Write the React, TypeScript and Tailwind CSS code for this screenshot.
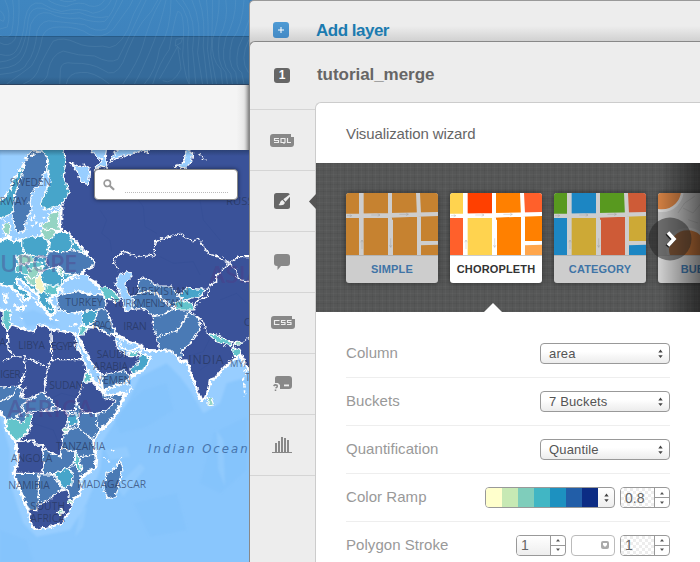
import React from "react";

const NAVY = "#3a5299";
const BLUE = "#4a7ab5";
const TEAL = "#47a5ca";
const AQUA = "#63c4cb";
const MINT = "#94d4c3";
const CREAM = "#f4f5c4";
const SEA = "#98ceff";

type Shape = [string, string];

const land: Shape[] = [
  [NAVY, "M188 -10L760 -10 760 662 747 660 730 635 720 610 705 625 675 650 645 685 630 690 625 720 615 745 603 752 585 705 570 660 560 632 540 635 530 618 510 600 475 602 435 600 420 585 385 575 345 550 330 510 300 460 290 400 240 370 180 340Z"],
  [TEAL, "M-10 275L25 262 40 275 65 268 120 258 170 245 205 248 280 335 250 365 205 385 185 410 170 432 150 440 148 455 165 470 166 488 152 500 135 480 120 460 110 430 85 412 55 385 48 400 95 440 80 450 60 432 30 410 -10 400Z"],
  [NAVY, "M235 562L245 530 290 532 325 552 345 552 356 590 375 605 415 605 450 625 435 655 395 680 375 695 310 722 300 672 270 635Z"],
  [BLUE, "M-10 480L10 480 30 485 25 510 35 525 80 540 100 548 110 530 135 525 155 540 190 545 220 550 235 580 222 585 240 620 255 645 262 675 285 700 305 725 325 738 375 728 350 790 325 820 300 840 280 870 288 915 285 955 245 980 240 1035 215 1050 210 1080 185 1120 150 1130 105 1138 95 1120 85 1080 60 1020 42 970 55 930 45 875 20 840 18 810 0 785 -10 785Z"],
];

const countries: Shape[] = [
  [TEAL, "M118 -10L80 25 65 50 42 85 30 120 10 145 -10 160 -10 210 25 195 40 182 45 130 65 80 90 30Z"],
  [BLUE, "M85 12L105 0 140 8 145 50 130 75 122 100 95 130 90 160 97 180 80 202 75 240 52 252 40 220 38 180 45 130 65 80 73 35Z"],
  [TEAL, "M120 -10L190 -10 197 40 190 80 208 125 188 160 165 172 132 180 122 160 140 120 152 92 140 60 145 30Z"],
  [MINT, "M147 190L178 185 175 215 179 242 150 240 125 235 125 222 145 215Z"],
  [MINT, "M122 240L160 238 168 250 155 270 130 268Z"],
  [MINT, "M10 240L16 220 28 215 30 245 18 255Z"],
  [TEAL, "M150 268L168 246 205 248 218 285 205 305 160 305 145 300Z"],
  [TEAL, "M65 265L120 258 145 275 145 320 120 322 75 310 65 290Z"],
  [BLUE, "M145 305L205 305 215 298 245 305 282 330 278 350 250 362 240 375 195 370 180 350 150 355 135 335Z"],
  [MINT, "M48 320L75 312 105 328 90 342 60 340Z"],
  [AQUA, "M50 345L90 343 100 335 128 338 120 355 80 375 48 364Z"],
  [MINT, "M85 355L130 350 120 370 100 385 80 378Z"],
  [TEAL, "M125 362L165 352 188 380 185 405 135 405 118 385Z"],
  [MINT, "M172 350L186 355 190 380 180 372Z"],
  [MINT, "M75 382L105 383 104 410 82 395Z"],
  [CREAM, "M105 385L122 376 133 402 130 425 118 430 104 410Z"],
  [AQUA, "M133 407L182 408 168 432 140 434Z"],
  [BLUE, "M170 440L200 430 240 425 275 436 305 433 318 460 315 480 245 485 210 490 175 480Z"],
  [TEAL, "M248 485L295 480 285 510 265 528 246 522Z"],
  [BLUE, "M295 480L318 478 330 510 345 550 325 555 290 530 265 530 285 512Z"],
  [AQUA, "M240 530L265 530 250 555 238 555Z"],
  [AQUA, "M290 408L328 414 360 440 350 462 336 446 318 445Z"],
  [BLUE, "M415 388L440 383 470 408 515 408 533 438 550 450 520 472 470 430 440 422 417 435Z"],
  [BLUE, "M395 440L440 422 465 430 500 462 518 475 490 495 460 500 430 475 395 478Z"],
  [BLUE, "M460 500L490 495 520 475 550 475 568 480 545 520 530 545 470 560 460 530Z"],
  [BLUE, "M470 560L530 545 550 520 568 485 590 500 604 530 570 580 545 600 548 625 530 618 510 600 480 600Z"],
  [TEAL, "M535 435L560 415 618 418 600 438 555 450Z"],
  [AQUA, "M520 457L550 452 577 460 583 480 530 480Z"],
  [AQUA, "M623 550L650 555 695 578 690 588 650 575Z"],
  [MINT, "M702 575L720 573 724 582 704 583Z"],
  [AQUA, "M695 592L722 600 715 620 703 620Z"],
  [MINT, "M622 742L634 745 641 765 625 768Z"],
  [TEAL, "M415 625L425 608 450 625 435 655 395 675 390 655 410 645Z"],
  [AQUA, "M385 610L420 598 410 620 390 620Z"],
  [BLUE, "M305 675L375 662 390 680 375 695 310 720Z"],
  [NAVY, "M-10 480L10 480 12 520 22 545 25 600 45 618 0 638 -10 640Z"],
  [AQUA, "M10 480L32 484 28 510 35 522 22 545 8 515Z"],
  [NAVY, "M35 525L80 540 100 548 110 530 135 525 153 540 155 632 143 652 72 618 45 618 25 600 22 545Z"],
  [NAVY, "M153 540L220 550 235 580 222 585 240 610 255 628 155 629Z"],
  [NAVY, "M-10 640L45 618 72 618 77 662 60 700 55 708 -10 712Z"],
  [NAVY, "M72 618L143 652 133 700 140 720 110 735 70 750 60 705 77 662Z"],
  [NAVY, "M155 629L255 629 262 672 245 712 230 750 225 785 190 782 160 768 134 730 135 700 145 650Z"],
  [AQUA, "M255 670L268 670 277 695 250 697Z"],
  [NAVY, "M250 697L275 695 300 725 310 745 350 752 320 782 290 790 250 785 228 758Z"],
  [BLUE, "M65 765L120 730 134 730 165 765 150 780 75 790Z"],
  [NAVY, "M85 786L150 780 195 782 207 798 190 850 185 895 180 920 165 913 130 898 128 884 105 885 98 870 50 875 82 850 95 820Z"],
  [AQUA, "M20 810L45 805 70 820 80 790 97 790 90 835 70 860 48 872 20 840Z"],
  [TEAL, "M205 790L235 792 235 818 205 833Z"],
  [MINT, "M190 838L202 834 200 852 190 855Z"],
  [NAVY, "M50 875L98 872 105 888 128 885 130 920 128 970 45 970 57 930Z"],
  [BLUE, "M235 790L290 790 290 820 300 840 280 870 235 832Z"],
  [BLUE, "M130 898L165 913 182 922 185 895 225 905 225 940 200 955 165 970 130 972Z"],
  [BLUE, "M115 975L160 975 188 1018 140 1055 115 1062Z"],
  [AQUA, "M225 903L238 925 245 958 236 965 223 935Z"],
  [TEAL, "M163 972L200 955 220 970 215 1005 190 1015Z"],
  [NAVY, "M85 1080L110 1082 115 1062 140 1055 175 1025 205 1018 208 1045 218 1055 210 1080 185 1120 150 1130 105 1138 95 1120Z"],
  [MINT, "M172 1085L185 1077 192 1085 180 1096Z"],
  [MINT, "M204 1050L214 1048 214 1060 204 1060Z"],
  [BLUE, "M360 930L368 955 345 1040 325 1048 312 1020 318 970 345 960Z"],
  [SEA, "M180 410L205 385 235 385 245 370 265 378 268 392 295 410 310 430 275 435 235 420 195 432Z"],
  [SEA, "M345 400L360 372 385 365 396 378 375 400 385 430 400 450 398 480 375 482 365 440Z"],
  [SEA, "M210 38L235 52 250 45 270 55 265 105 240 90 232 65Z"],
  [SEA, "M280 10L270 -10 320 -10 316 20 322 55 300 50 283 58 305 30Z"],
  [SEA, "M328 38L345 5 380 -10 450 -10 445 10 420 0 390 15 350 22Z"],
  [SEA, "M560 0L578 8 575 35 555 55 525 48 550 38Z"],
];

const borders =
  "M750 320L715 320 685 340 660 322 625 312 610 285 595 265 577 275 540 250 500 262 465 275 462 318 440 315 410 320 375 305 345 320 340 335 358 360M685 340L710 360 715 388 750 395M685 340L650 378 650 395 630 405 622 440 590 455 583 480M590 500L612 520 620 550M725 578L750 560M718 600L735 632M0 755L35 740 60 705M45 805L75 780M75 712L60 745M190 850L215 835 235 832M237 920L285 915M600 10L610 28 620 30";

function WorldMap() {
  return (
    <svg className="block h-full w-full" viewBox="0 0 747 1236" preserveAspectRatio="none">
      <defs>
        <filter id="rough" x="0" y="0" width="100%" height="100%" colorInterpolationFilters="sRGB">
          <feTurbulence type="fractalNoise" baseFrequency="0.09" numOctaves="3" seed="8" />
          <feDisplacementMap in="SourceGraphic" scale="16" xChannelSelector="R" yChannelSelector="G" />
        </filter>
        <filter id="soft" x="-5%" y="-5%" width="110%" height="110%">
          <feGaussianBlur stdDeviation="3" />
        </filter>
        <linearGradient id="mapShade" x1="0" y1="0" x2="0" y2="1">
          <stop offset="0" stopColor="#123" stopOpacity=".35" />
          <stop offset="1" stopColor="#123" stopOpacity="0" />
        </linearGradient>
      </defs>
      <rect width="750" height="1236" fill="#89c6fd" />
      <g filter="url(#soft)">
        <path fill={SEA} d="M0 0H190V250L110 270 0 270ZM0 370L300 370 420 480 320 580 260 600 200 560 0 530ZM0 800L30 900 30 1000 70 1120 110 1160 210 1140 260 1060 300 960 310 870 380 760 420 680 500 640 540 680 570 720 610 790 660 760 680 700 747 680V560H220L0 600Z" />
        <path fill="#80c0f9" opacity=".4" d="M60 490L100 480 150 500 180 530 140 520 80 530ZM340 800L430 720 500 700 520 780 440 830 360 850ZM640 850L740 800V960L660 1030 600 1000ZM400 1060L530 1030 560 1140 450 1160ZM0 1140L80 1170 100 1236H0Z" />
        <path fill="#a3d4ff" opacity=".35" d="M290 850L320 900 380 890 390 920 330 930ZM650 840L670 870 675 1010 655 960ZM350 1010L420 940 435 955 370 1040ZM240 1080L260 1070 250 1130 225 1160Z" />
      </g>
      <g filter="url(#rough)" strokeLinejoin="round">
        {land.map(([fill, d]) => <path key={d} d={d} fill={fill} stroke="#fff" strokeWidth="8" />)}
        {countries.map(([fill, d]) => <path key={d} d={d} fill={fill} stroke="#fff" strokeWidth="3.6" />)}
        <path d={borders} fill="none" stroke="#fff" strokeWidth="3.8" />
        <path fill="#98ceff" stroke="#fff" strokeWidth="4" d="M222 553L232 556 250 600 272 635 298 672 300 705 284 692 262 660 245 618ZM345 553L358 562 362 590 385 603 425 590 424 600 376 614 352 594Z" />
        <g fill="none" stroke="#fff" strokeWidth="6" strokeDasharray="9 7 15 8">
          <path d="M115 0L78 32 66 55 42 88 30 120 8 145 0 155M12 208L8 240 25 260 45 262M90 210L102 195 110 218 96 230M132 200L122 225M130 178L195 176M135 450L160 452M128 470L160 480M100 440L118 475M150 505L175 512M40 465L70 478M60 505L72 510M50 435L80 470" />
          <path d="M378 700L400 718M375 740L392 715M720 610L740 650 730 690 735 740M180 375L248 372M250 365L285 350M205 530L235 520M365 920L340 960M310 920L330 935M340 900L330 905" strokeWidth="4.5" />
        </g>
        <path fill={TEAL} stroke="#fff" strokeWidth="6" d="M12 435L20 432 20 455 14 456ZM50 475L72 468 66 482Z" />
      </g>
      <g fill="none" stroke="#2f498f" strokeWidth="2" opacity=".45">
        <path d="M300 180l20 30-15 40 25 20 5 35M400 130l30 40 5 60 35 20M480 320l40 20 60-5 20 40M600 150l10 60 50 60M560 620l50-15 20-40M600 660l30-20M660 450l50-20 30 30M100 820l60 20 20 50M155 745l30-15 40 10 20-25" />
      </g>
      <g fontFamily='"Open Sans","Noto Sans",sans-serif' fill="#253257" fillOpacity=".66" fontSize="31">
        <text x="30" y="109" textLength="124">SWEDEN</text>
        <text x="-24" y="166" textLength="105">ORWAY</text>
        <text x="678" y="166" fontSize="34">RUSSIA</text>
        <text x="196" y="469" textLength="112">TURKEY</text>
        <text x="278" y="536" textLength="60">IRAQ</text>
        <text x="370" y="541" textLength="70" fontSize="32">IRAN</text>
        <text x="382" y="435" textLength="186">UZBEKISTAN</text>
        <text x="340" y="470" textLength="210">TURKMENISTAN</text>
        <text x="55" y="597" textLength="80">LIBYA</text>
        <text x="153" y="600" textLength="82">EGYPT</text>
        <text x="-2" y="589">A</text>
        <text x="-20" y="684" textLength="82">NIGER</text>
        <text x="148" y="717" textLength="102">SUDAN</text>
        <text x="290" y="624" textLength="90">SAUDI</text>
        <text x="280" y="660" textLength="104">ARABIA</text>
        <text x="292" y="703" textLength="102">YEMEN</text>
        <text x="565" y="642" textLength="106" fontSize="37">INDIA</text>
        <text x="690" y="651" fontSize="28">MYA</text>
        <text x="735" y="693">T</text>
        <text x="731" y="527" fontSize="34">C</text>
        <text x="168" y="899" textLength="148">TANZANIA</text>
        <text x="33" y="936" textLength="124">ANGOLA</text>
        <text x="25" y="1017" textLength="124">NAMIBIA</text>
        <text x="232" y="1015" textLength="206">MADAGASCAR</text>
        <text x="91" y="1080" textLength="104">SOUTH</text>
        <text x="91" y="1116" textLength="104">AFRICA</text>
      </g>
      <g fontFamily='"Open Sans","Noto Sans",sans-serif' fontWeight="600" fill="#53357f" fillOpacity=".36" fontSize="72">
        <text x="-38" y="366" textLength="270">EUROPE</text>
        <text x="22" y="800" textLength="258">AFRICA</text>
        <text x="628" y="399">ASIA</text>
      </g>
      <text x="444" y="909" textLength="299" fontFamily='"DejaVu Sans",sans-serif' fontStyle="italic" fontSize="35" fill="#4775ad">Indian Ocean</text>
      <rect width="750" height="18" fill="url(#mapShade)" />
    </svg>
  );
}

function Contours() {
  return (
    <svg className="h-full w-full" viewBox="0 0 750 255" preserveAspectRatio="none">
      <g fill="none" stroke="#9ac1d8" strokeWidth="2.2" opacity=".18">
        <path d="M0 32Q20 50 10 65L0 60M15 0Q35 40 22 82L0 88M38 0Q45 45 35 100Q25 120 0 108M57 0Q60 80 45 120Q25 145 0 130M0 165Q35 175 48 155Q70 120 75 60Q85 0 125 10Q155 30 185 35Q240 20 280 40Q320 35 335 0" />
        <path d="M0 208Q55 205 70 170Q85 145 92 75Q110 30 150 40Q185 60 240 55Q285 70 315 65Q340 40 352 0M0 188Q40 185 60 160Q80 120 85 60Q90 18 130 25Q185 50 240 38Q290 60 325 50M0 226Q75 220 82 190Q105 165 112 95Q125 55 165 65Q220 70 255 75Q290 100 320 88Q355 30 370 0" />
        <path d="M20 255Q70 220 95 200Q120 160 128 110Q140 80 180 82Q235 80 270 105Q305 120 340 90Q365 55 390 20L400 0M70 255Q110 240 120 200Q145 150 160 125Q190 110 230 130Q260 145 310 140Q350 160 385 90Q400 40 425 0M120 250Q145 240 145 215Q155 165 190 155Q235 170 285 170Q330 195 355 180Q390 110 410 65L440 0" />
        <path d="M180 255L182 210Q185 185 220 192Q275 190 310 212Q345 240 370 190Q405 100 430 65Q460 35 475 0M200 255Q205 220 245 220Q280 215 330 255M145 0Q165 15 200 20Q240 0 270 18Q300 25 315 0M180 0Q205 10 230 0M370 255Q415 190 430 140Q450 60 485 0M405 255Q430 210 450 160Q480 90 500 0M435 255Q470 215 480 150Q515 90 515 0M460 255Q480 190 510 150Q525 60 535 35Q560 30 550 170Q560 245 570 255M480 240Q515 180 535 140Q545 200 545 210Q520 260 490 245M530 120L550 115 545 130 528 140 530 120M532 140L545 150" />
        <path d="M530 0Q580 45 565 130L570 255M550 0Q595 60 580 150L590 255M578 0Q610 70 595 160L610 255M600 0Q620 60 612 140L625 255M622 0Q630 80 625 150L640 255M640 0Q640 100 635 165L652 255M660 0Q660 60 640 120Q635 180 665 210L670 255M680 0Q690 60 660 115Q650 190 680 220L685 255M710 0Q710 60 680 115Q660 190 695 225L700 255M735 0Q730 80 700 120Q680 190 710 220L715 255M750 60Q735 110 718 145Q705 210 728 220L735 255M750 120Q720 180 748 220" />
      </g>
    </svg>
  );
}

const Roads = ({ color }: { color: string }) => (
  <>
    <path fill={color} d="M39 0h14v186h-14zM126 0h12v186h-12zM126 80h15v106h-15zM210 0h12l3 60v126h-12V70zM0 62L130 60 276 57v12L130 74 0 75zM222 144h54v11l-54 2z" />
    <g stroke="#777" strokeWidth="2.5" opacity=".28" fill="none">
      <path d="M3 68h14m-6-4l6 4-6 4M76 66h26m-7-4l7 4-7 4M160 64h27m-7-4l7 4-7 4M48 168v-27m-4 7l4-7 4 7M134 136v27m-4-7l4 7 4-7" />
    </g>
  </>
);

const mapTiles: Record<string, { fills: string[]; road: string }> = {
  SIMPLE: { fills: Array(10).fill("#c68230"), road: "#cdcdcd" },
  CHOROPLETH: { fills: ["#ffd34f", "#ff4000", "#ff8000", "#ff602b", "#ff602b", "#ffd34f", "#ff8000", "#ff8000", "#ffa64c"], road: "#fff" },
  CATEGORY: { fills: ["#58991f", "#1c86c3", "#58991f", "#ce5b37", "#1c86c3", "#cda936", "#ce5b37", "#cda936", "#1c86c3"], road: "#cdcdcd" },
};

const blocks = ["M0 0h45v66H0z", "M45 0h87v66H45z", "M132 0h84v66h-84z", "M216 0h60v66h-60z", "M0 66h45v120H0z", "M45 66h87v120H45z", "M132 66h84v120h-84z", "M216 66h60v84h-60z", "M216 150h60v36h-60z"];

function Thumb({ name }: { name: string }) {
  const active = name === "CHOROPLETH";
  const tile = mapTiles[name];
  return (
    <div className={"h-[90px] w-[92px] shrink-0 overflow-hidden rounded-[3px] shadow-[0_0_6px_rgba(0,0,0,0.45)] " + (active ? "bg-white" : "bg-[#cdcdcd]")}>
      <svg className="block h-[62px] w-[92px]" viewBox="0 0 276 186">
        {tile ? (
          <>
            {blocks.map((d, i) => <path key={d} d={d} fill={tile.fills[i]} />)}
            <Roads color={tile.road} />
          </>
        ) : (
          <>
            <rect width="276" height="186" fill="#bababa" />
            <path d="M60 60l20-30 30-20M75 45l30 15 25-30M90 80l30 10" stroke="#aaa" strokeWidth="3" fill="none" />
            <circle cx="12" cy="-8" r="61" fill="#cc7c41" stroke="#d0d0d0" strokeWidth="8" />
            <circle cx="89" cy="168" r="60" fill="#bd7139" stroke="#c8c8c8" strokeWidth="8" />
          </>
        )}
      </svg>
      <div className={"flex h-7 items-center justify-center border-t text-[11px] font-bold tracking-[0.15px] " + (active ? "border-[#ccc] text-[#333]" : "border-[#b4b4b4] text-[#3f74a6]")}>
        {name}
      </div>
    </div>
  );
}

const Arrows = ({ gap = false }: { gap?: boolean }) => (
  <svg className={gap ? "h-[20px] w-[14px]" : "h-[10px] w-[5px]"} viewBox={gap ? "0 0 14 20" : "0 0 5 10"}>
    {gap ? (
      <path fill="#555" d="M5 6.5h4L7 4zM5 13.5h4L7 16z" />
    ) : (
      <path fill="#444" d="M.3 3.4h4.4L2.5 .5zM.3 6.2h4.4L2.5 9.1z" />
    )}
  </svg>
);

function Select({ value }: { value: string }) {
  return (
    <div className="flex h-[21px] w-[130px] items-center justify-between rounded-[4px] border border-[#999] bg-linear-to-b from-white from-40% to-[#ececec] pr-[6px] pl-2 text-[13px] tracking-[0.15px] text-[#555]">
      <span>{value}</span>
      <Arrows />
    </div>
  );
}

function Spinner({ value, checks = false }: { value: string; checks?: boolean }) {
  return (
    <div className="flex h-[21px] w-[50px] overflow-hidden rounded-[4px] border border-[#999] bg-white text-[14px] text-[#666]">
      <div className={"flex w-[34px] items-center border-r border-[#999] pt-px pl-1 " + (checks ? "bg-[repeating-conic-gradient(#ededed_0_25%,#fff_0_50%)] bg-[length:6px_6px]" : "bg-linear-to-b from-white to-[#eee]")}>
        {value}
      </div>
      <div className="relative flex flex-1 items-center justify-center">
        <div className="absolute inset-x-0 top-[9px] h-px bg-[#999]" />
        <Arrows gap />
      </div>
    </div>
  );
}

function Row({ label, children, last }: { label: string; children: React.ReactNode; last?: boolean }) {
  return (
    <div className={"flex h-12 items-center justify-between " + (last ? "" : "border-b border-[#eee]")}>
      <span className="text-[15px] tracking-[0.05px] text-[#999]">{label}</span>
      <div className="flex items-center gap-[5px]">{children}</div>
    </div>
  );
}

const tag = (
  <path d="M3 0h18v3h3v7q0 3-3 3H3q-3 0-3-3V3Q0 0 3 0z" fill="#888" />
);

const tools: React.ReactNode[] = [
  <svg key="sql" className="h-[13px] w-6" viewBox="0 0 24 13">
    {tag}
    <path d="M9 4.5H4.5v2h4v2H4M11 4.5h4v4h-4zM14 8v2M17.5 4v4.5H21" fill="none" stroke="#eee" strokeWidth="1.15" />
  </svg>,
  <svg key="brush" className="h-4 w-4" viewBox="0 0 16 16">
    <rect width="16" height="16" rx="2.5" fill="#666" />
    <path d="M16 1.2L9.3 6.3l2.2 2.5L16 3.7zM8.5 7.1l2.3 2.5c0 2-2 3-6.3 2.4 1.8-.7 1.2-4 4-4.9z" fill="#eee" />
  </svg>,
  <svg key="bubble" className="h-4 w-4" viewBox="0 0 16 16">
    <path d="M3 0h10q3 0 3 3v6q0 3-3 3H7l-3.5 4V12H3q-3 0-3-3V3q0-3 3-3z" fill="#888" />
  </svg>,
  <svg key="css" className="mb-px ml-0.5 h-[13px] w-6" viewBox="0 0 24 13">
    {tag}
    <path d="M8.5 4.5h-5v4h5M14.5 4.5H10.500v2h3.500v2H10M20.500 4.500h-4v2h3.500v2H16" fill="none" stroke="#eee" strokeWidth="1.15" />
  </svg>,
  <svg key="info" className="h-4 w-[19px]" viewBox="0 0 19 16">
    <path d="M4 0h12q3 0 3 3v7q0 3-3 3H7V9L5 7H2V2q0-2 2-2z" fill="#888" />
    <path d="M11 8.500h5v1.800h-5z" fill="#eee" />
    <path d="M.6 10Q2 8.300 4 9.200Q5 11 2.500 12M2.500 13.500v1.500" fill="none" stroke="#888" strokeWidth="1.500" />
  </svg>,
  <svg key="bars" className="h-4 w-5" viewBox="0 0 20 16">
    <path d="M0 15h20v1H0zM3 6h2v9H3zM6 4h2v11H6zM9 0h2v15H9zM12 1h2v14h-2zM15 3h2v12h-2z" fill="#888" />
  </svg>,
];

const ramp = ["#ffffcc", "#c7e9b4", "#7fcdbb", "#41b6c4", "#1d91c0", "#225ea8", "#0c2c84"];

export default function App() {
  return (
    <div className='flex h-[562px] w-[700px] overflow-hidden bg-[#ececec] font-["Liberation_Sans",Arial,sans-serif]'>
      <div className="flex w-[249px] shrink-0 flex-col">
        <div className="relative h-[85px] border-b border-[#2b4360] bg-linear-to-b from-[#3f86c0] to-[#3d7fba]">
          <div className="absolute inset-x-0 top-9 bottom-0 border-t border-[#285b87] bg-linear-to-b from-[#356b9b] from-85% to-[#2d5c86]" />
          <div className="absolute inset-0"><Contours /></div>
        </div>
        <div className="h-[65px] bg-[linear-gradient(to_right,#f4f4f4_95%,#e8e8e8_98%,#c9c9c9)]" />
        <div className="relative h-[412px]">
          <WorldMap />
          <div className="absolute top-[19px] left-[94px] flex h-[31px] w-36 items-center rounded-[4px] border border-[#888] bg-white pr-[9px] pl-2 shadow-[0_0_4px_rgba(0,0,0,0.5)]">
            <svg className="h-3 w-3" viewBox="0 0 12 12">
              <circle cx="4.300" cy="4.300" r="3.200" fill="none" stroke="#999" strokeWidth="1.600" />
              <path d="M6.500 6.500l4.600 4.300" stroke="#999" strokeWidth="2.200" />
            </svg>
            <div className="mt-[15px] ml-[10px] flex-1 border-b border-dotted border-[#bbb]" />
          </div>
        </div>
      </div>

      <div className="flex min-w-0 flex-1 flex-col bg-[#3d7fba] shadow-[-1px_0_4px_rgba(0,0,0,0.5)]">
        <div className="z-0 -mb-[10px] flex h-[51px] shrink-0 items-start rounded-tl-[5px] border-t border-l border-[#999] bg-[linear-gradient(to_bottom,#ededed_50%,#cfcfcf_82%)] pt-[21px] pl-[23px]">
          <div className="flex h-4 w-4 items-center justify-center rounded-[3px] bg-linear-to-b from-[#4e9bd5] to-[#4389c4]">
            <svg className="h-[6px] w-[6px]" viewBox="0 0 6 6"><path d="M3 0v6M0 3h6" stroke="#fff" /></svg>
          </div>
          <span className="ml-[27px] text-[17px] leading-[18px] font-bold tracking-[-0.5px] text-[#1c7bb0]">Add layer</span>
        </div>
        <div className="z-10 flex min-h-0 flex-1 flex-col rounded-tl-[6px] border-t border-l border-[#888] bg-[#ededed]">
          <div className="-mb-[7px] flex h-[67px] shrink-0 items-center pb-px pl-6">
            <div className="flex h-[15px] w-4 items-center justify-center rounded-[3px] bg-[#666] text-[12px] font-bold text-white">1</div>
            <span className="ml-[27px] text-[17px] font-bold tracking-[-0.05px] text-[#666]">tutorial_merge</span>
          </div>
          <div className="flex min-h-0 flex-1">
            <div className="flex w-[65px] shrink-0 flex-col pt-[7px]">
              {tools.map((icon, i) => (
                <div key={i} className="relative flex h-[61px] shrink-0 items-center justify-center border-t border-[#d5d5d5] pr-px">
                  {icon}
                  {i === 1 && (
                    <svg className="absolute top-[23px] -right-px h-[15px] w-[7px]" viewBox="0 0 7 15">
                      <path d="M7 0v15L0 7.500z" fill="#555" />
                    </svg>
                  )}
                </div>
              ))}
              <div className="border-t border-[#d5d5d5]" />
            </div>
            <div className="flex min-w-0 flex-1 flex-col overflow-hidden rounded-tl-[6px] border-t border-l border-[#ccc] bg-white">
              <div className="flex h-[60px] shrink-0 items-center pt-[3px] pl-[30px] text-[15px] tracking-[-0.1px] text-[#666]">Visualization wizard</div>
              <div className="relative h-[149px] shrink-0 overflow-hidden bg-[#565757] bg-[repeating-linear-gradient(to_right,rgba(0,0,0,0.045)_0_1px,transparent_1px_3px,rgba(255,255,255,0.025)_3px_4px,transparent_4px_7px),repeating-linear-gradient(to_bottom,rgba(0,0,0,0.045)_0_1px,transparent_1px_4px,rgba(255,255,255,0.025)_4px_5px,transparent_5px_7px)]">
                <div className="flex gap-3 pt-[30px] pl-[30px]">
                  {["SIMPLE", "CHOROPLETH", "CATEGORY", "BUBBLE"].map((name) => <Thumb key={name} name={name} />)}
                </div>
                <div className="absolute inset-y-0 right-0 w-10 bg-linear-to-r from-transparent to-black/50" />
                <svg className="absolute top-[54px] left-[332px] h-11 w-11" viewBox="0 0 44 44">
                  <circle cx="22" cy="22" r="21.500" fill="#222" fillOpacity=".52" />
                  <path d="M20 15.500l6 6.500-6 6.500" transform="translate(-1 1)" fill="none" stroke="#222" strokeWidth="4" />
                  <path d="M20 15.500l6 6.500-6 6.500" fill="none" stroke="#fff" strokeWidth="3.600" />
                </svg>
                <svg className="absolute bottom-0 left-[168px] h-[9px] w-[18px]" viewBox="0 0 18 9"><path d="M0 9L9 0l9 9z" fill="#fff" /></svg>
              </div>
              <div className="mt-[18px] mr-[30px] ml-[30px] shrink-0">
                <Row label="Column"><Select value="area" /></Row>
                <Row label="Buckets"><Select value="7 Buckets" /></Row>
                <Row label="Quantification"><Select value="Quantile" /></Row>
                <Row label="Color Ramp">
                  <div className="flex h-[21px] w-[130px] items-center overflow-hidden rounded-[4px] border border-[#999] bg-linear-to-b from-white to-[#eee]">
                    {ramp.map((c) => <div key={c} className="h-full w-4 shrink-0" style={{ backgroundColor: c }} />)}
                    <div className="ml-[6px] flex"><Arrows /></div>
                  </div>
                  <Spinner value="0.8" checks />
                </Row>
                <div className="-mt-px">
                  <Row label="Polygon Stroke" last>
                    <Spinner value="1" />
                    <div className="flex h-[21px] w-[44px] items-center justify-end rounded-[4px] border border-[#bbb] bg-white pr-[5px]">
                      <svg className="h-2 w-2" viewBox="0 0 8 8"><rect width="8" height="8" rx="2" fill="#aaa" /><path d="M2 2h4v2L4 6 2 4z" fill="#fff" /></svg>
                    </div>
                    <Spinner value="1" checks />
                  </Row>
                </div>
              </div>
            </div>
          </div>
        </div>
      </div>
    </div>
  );
}
